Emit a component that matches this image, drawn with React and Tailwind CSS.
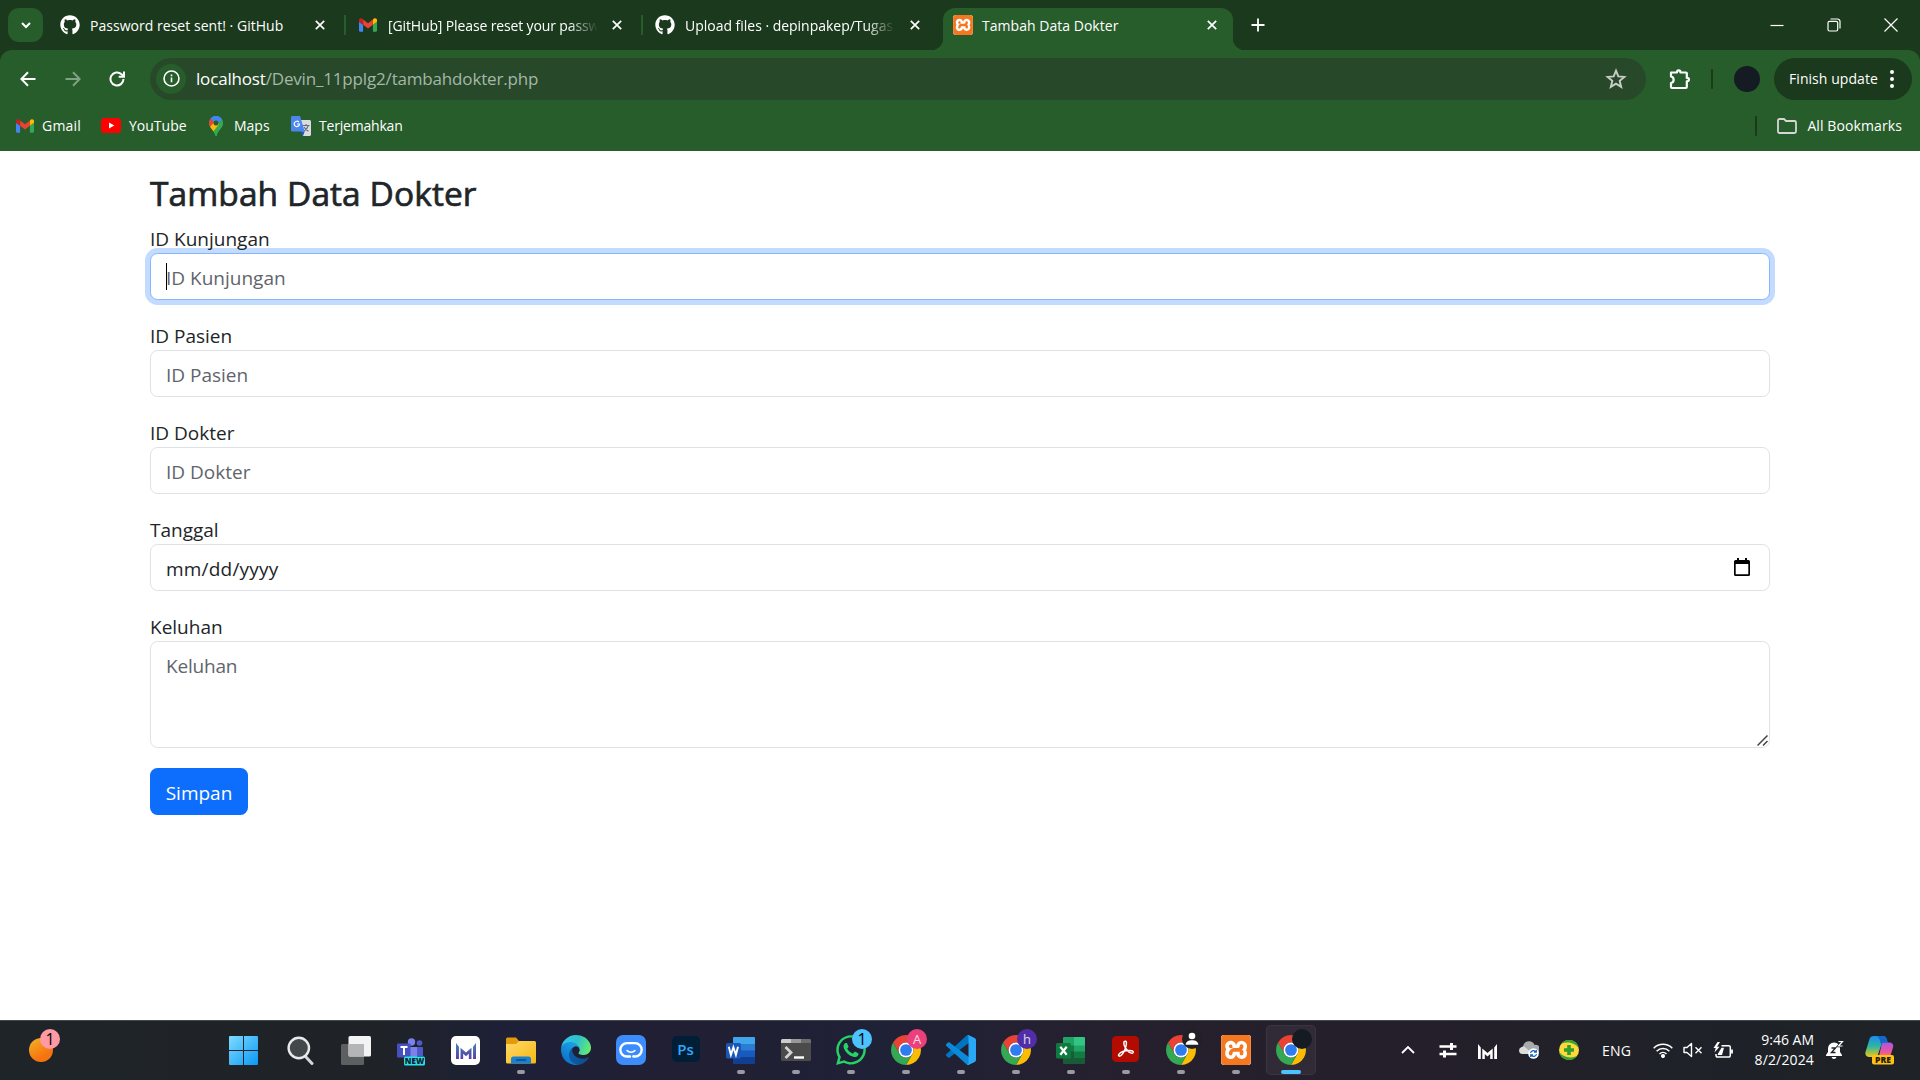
import React from "react";
import { FaGithub, FaWhatsapp } from "react-icons/fa";
import { SiXampp } from "react-icons/si";

/* ---------- Brand icons ---------- */

const Gmail = ({ className }) => (
  <svg viewBox="52 42 88 66" className={className}>
    <path fill="#4285f4" d="M58 108h14V74L52 59v43c0 3.32 2.69 6 6 6" />
    <path fill="#34a853" d="M120 108h14c3.32 0 6-2.69 6-6V59l-20 15" />
    <path fill="#fbbc04" d="M120 48v26l20-15v-8c0-7.42-8.47-11.65-14.4-7.2" />
    <path fill="#ea4335" d="M72 74V48l24 18 24-18v26L96 92" />
    <path fill="#c5221f" d="M52 51v8l20 15V48l-5.6-4.2c-5.94-4.45-14.4-.22-14.4 7.2" />
  </svg>
);

const Chrome = ({ className }) => (
  <svg viewBox="2 2 44 44" className={className}>
    <path fill="#ea4335" d="M4.95 13A22 22 0 0 1 43.05 13H24A11 11 0 0 0 14.47 29.5Z" />
    <path fill="#fbbc04" d="M43.05 13A22 22 0 0 1 24 46L33.53 29.5A11 11 0 0 0 24 13Z" />
    <path fill="#34a853" d="M24 46A22 22 0 0 1 4.95 13L14.47 29.5A11 11 0 0 0 33.53 29.5Z" />
    <circle cx="24" cy="24" r="11" fill="#fff" />
    <circle cx="24" cy="24" r="8.6" fill="#2f7bf0" />
  </svg>
);

const Xampp = ({ className }) => (
  <span className={`relative block overflow-hidden rounded-[3px] bg-white ${className}`}>
    <SiXampp className="block h-full w-full text-[#f5771f]" />
  </span>
);

const YouTube = () => (
  <svg viewBox="0 0 20 15" className="h-[15px] w-5">
    <rect width="20" height="15" rx="3.6" fill="#f00" />
    <path d="M8 4.4v6.2l5.3-3.1z" fill="#fff" />
  </svg>
);

const MapsPin = () => (
  <svg viewBox="0 0 14 20" className="h-5 w-3.5">
    <defs>
      <clipPath id="pin">
        <path d="M7 0a7 7 0 0 1 7 7c0 5.2-5 6.700-6.300 12.400-.2.800-1.200.800-1.400 0C5 13.700 0 12.200 0 7a7 7 0 0 1 7-7z" />
      </clipPath>
    </defs>
    <g clipPath="url(#pin)">
      <rect width="14" height="20" fill="#34a853" />
      <path d="M0 0h7L2 6H0z" fill="#1a73e8" />
      <path d="M4 0h10v3L7 9z" fill="#4285f4" />
      <path d="M0 1l6 5-4 6H0z" fill="#ea4335" />
      <path d="M1 11l6-7 4 5-7 7z" fill="#fbbc04" />
      <path d="M14 3L4 16l3 4h7z" fill="#34a853" />
      <path d="M3 0h9v3L7 8 1.500 2.500z" fill="#4285f4" />
    </g>
    <circle cx="7" cy="7" r="2.500" fill="#275d2b" />
  </svg>
);

const Translate = () => (
  <svg viewBox="0 0 20 20" className="h-5 w-5">
    <path d="M7 4h11.500c.9 0 1.500.6 1.500 1.500v13c0 .9-.6 1.500-1.500 1.500H12z" fill="#dadce0" />
    <path d="M11.500 9.500h7M15 8v1.500M17.300 9.500c-.7 2.700-2.300 4.300-4.300 5.500M13 11c.8 1.700 2.400 3.300 4.500 4.200" stroke="#5f6f80" strokeWidth="1.100" fill="none" />
    <path d="M1.500 0H9l4.700 15.500H1.500C.6 15.500 0 14.900 0 14V1.500C0 .6.6 0 1.500 0z" fill="#4a86ee" />
    <path d="M9.500 15.500h4.200L12 20z" fill="#1a57c2" />
    <path d="M7.900 6.100A2.700 2.700 0 1 0 8.600 8H6" stroke="#fff" strokeWidth="1.200" fill="none" />
  </svg>
);

/* ---------- Browser frame ---------- */

const CloseX = ({ className = "" }) => (
  <svg viewBox="0 0 10 10" className={`h-2.5 w-2.5 shrink-0 ${className}`}>
    <path d="M.8.8l8.400 8.400M9.200.8L.8 9.200" stroke="#fff" strokeWidth="1.700" fill="none" />
  </svg>
);

const Fade = ({ children }) => (
  <span className="w-[210px] shrink-0 overflow-hidden whitespace-nowrap [mask-image:linear-gradient(to_right,#000_86%,transparent)]">
    {children}
  </span>
);

const TabStrip = () => (
  <div className="flex h-[50px] bg-[#1b391c] text-[14px] text-white">
    <div className="mt-2 ml-2 flex h-[34px] w-[35px] items-center justify-center rounded-[11px] bg-[#275d2b]">
      <svg viewBox="0 0 10 7" className="h-[7px] w-2.5"><path d="M1 1l4 4 4-4" stroke="#fff" strokeWidth="2" fill="none" /></svg>
    </div>
    <div className="flex w-[301px] items-center pl-[17px]">
      <FaGithub className="h-5 w-5 shrink-0" />
      <span className="ml-2.5 w-[225px] whitespace-nowrap tracking-[0.03px]">Password reset sent! · GitHub</span>
      <CloseX />
    </div>
    <div className="mt-[15px] h-5 w-0.5 bg-[#275d2b]" />
    <div className="flex w-[295px] items-center pl-[13px]">
      <Gmail className="h-3.5 w-[18px] shrink-0" />
      <span className="w-[11px] shrink-0" />
      <Fade><span className="tracking-[-0.13px]">[GitHub] Please reset your passw</span></Fade>
      <CloseX className="ml-[14px]" />
    </div>
    <div className="mt-[15px] h-5 w-0.5 bg-[#275d2b]" />
    <div className="flex w-[300px] items-center pl-3">
      <FaGithub className="h-5 w-5 shrink-0" />
      <span className="w-2.5 shrink-0" />
      <Fade><span className="tracking-[-0.02px]">Upload files · depinpakep/Tugas</span></Fade>
      <CloseX className="ml-[15px]" />
    </div>
    <div className="relative mt-2 flex h-[42px] w-[290px] items-center rounded-t-[12px] bg-[#275d2b] pl-2.5 pb-2">
      <span className="absolute bottom-0 -left-3 h-3 w-3 bg-[radial-gradient(circle_at_0_0,transparent_12px,#275d2b_12.5px)]" />
      <span className="absolute -right-3 bottom-0 h-3 w-3 bg-[radial-gradient(circle_at_100%_0,transparent_12px,#275d2b_12.5px)]" />
      <Xampp className="h-5 w-5 shrink-0" />
      <span className="ml-[9px] w-[225px] whitespace-nowrap tracking-[0.03px]">Tambah Data Dokter</span>
      <CloseX />
    </div>
    <svg viewBox="0 0 14 14" className="mt-[18px] ml-[18px] h-3.5 w-3.5"><path d="M7 .5v13M.5 7h13" stroke="#fff" strokeWidth="1.800" /></svg>
    <div className="ml-auto flex items-center gap-[43px] pr-[22px]">
      <svg viewBox="0 0 14 14" className="h-3.5 w-3.5"><path d="M.5 7.500h13" stroke="#fff" strokeWidth="1.200" /></svg>
      <svg viewBox="0 0 14 14" className="h-3.5 w-3.5" fill="none" stroke="#fff" strokeWidth="1.200">
        <rect x="1" y="3.300" width="9.700" height="9.700" rx="1.500" />
        <path d="M3.500 1h7A2.500 2.500 0 0 1 13 3.500v7" />
      </svg>
      <svg viewBox="0 0 14 14" className="h-3.5 w-3.5"><path d="M.5.5l13 13M13.500.5l-13 13" stroke="#fff" strokeWidth="1.200" /></svg>
    </div>
  </div>
);

const Toolbar = () => (
  <div className="bg-[#1b391c]">
    <div className="flex h-[57px] items-center rounded-t-[12px] bg-[#275d2b] pl-5 pr-2">
      <svg viewBox="0 0 16 16" className="h-4 w-4" fill="none" stroke="#fff" strokeWidth="2"><path d="M15.500 8H1.500M8 1.300L1.400 8 8 14.700" /></svg>
      <svg viewBox="0 0 16 16" className="ml-[29px] h-4 w-4" fill="none" stroke="#80a282" strokeWidth="2"><path d="M.5 8h14M8 1.300L14.600 8 8 14.700" /></svg>
      <svg viewBox="0 0 16 16" className="ml-[28px] h-4 w-4" fill="none" stroke="#fff" strokeWidth="2"><path d="M14.500 8a6.500 6.500 0 1 1-2-4.700L14.500 5.300" /><path d="M15 .5v5.300H9.700" /></svg>
      <div className="ml-[25px] flex h-[42px] w-[1496px] items-center rounded-full bg-[#27492a] pl-1.5">
        <span className="flex h-[30px] w-[30px] items-center justify-center rounded-full bg-[#275d2b]">
          <svg viewBox="0 0 18 18" className="h-[17px] w-[17px]"><circle cx="9" cy="9" r="7.900" stroke="#fff" strokeWidth="1.700" fill="none" /><path d="M9 8v5M9 4.800v1.700" stroke="#fff" strokeWidth="1.700" /></svg>
        </span>
        <span className="mt-px ml-[10px] text-[17px] tracking-[-0.17px] text-[#a5b7a6]"><span className="text-white">localhost</span>/Devin_11pplg2/tambahdokter.php</span>
        <svg viewBox="0 0 24 24" className="mr-[18px] ml-auto h-6 w-6" fill="none" stroke="#c8cdc8" strokeWidth="1.900"><path d="M12 3.700l2.300 5.700 6.100.5-4.700 4 1.500 6L12 16.700l-5.200 3.200 1.500-6-4.700-4 6.100-.5z" /></svg>
      </div>
      <svg viewBox="0 0 22 22" className="ml-[23px] h-[22px] w-[22px]" fill="none" stroke="#fff" strokeWidth="2.200" strokeLinejoin="round"><path d="M2 4.500h6V4a1.700 1.700 0 0 1 3.400 0v.5H17a.8.8 0 0 1 .8.8v4.600h.4a1.700 1.700 0 0 1 0 3.400h-.4V19a1 1 0 0 1-1 1H3a1 1 0 0 1-1-1v-4c3.500-.5 3.500-6 0-6.500z" /></svg>
      <span className="ml-[20px] h-5 w-0.5 rounded bg-[#1b391c]" />
      <span className="ml-[21px] h-[26px] w-[26px] rounded-full bg-[#151b23]" />
      <div className="ml-auto flex h-[42px] w-[138px] items-center rounded-full bg-[#1b391c] pl-[15px] text-[14px] text-white">
        <span className="w-[99px] whitespace-nowrap tracking-[0.06px]">Finish update</span>
        <svg viewBox="0 0 4 18" className="h-[18px] w-1 ml-0.5" fill="#fff"><circle cx="2" cy="2" r="2" /><circle cx="2" cy="9" r="2" /><circle cx="2" cy="16" r="2" /></svg>
      </div>
    </div>
  </div>
);

const Bookmarks = () => (
  <div className="flex h-11 items-center bg-[#275d2b] pb-[7px] pl-4 text-[14px] text-white">
    <Gmail className="h-3.5 w-[18px]" />
    <span className="ml-2 w-[59px] tracking-[0.2px]">Gmail</span>
    <YouTube />
    <span className="ml-2 w-20">YouTube</span>
    <MapsPin />
    <span className="ml-[11px] w-[57px]">Maps</span>
    <Translate />
    <span className="ml-2 tracking-[-0.2px]">Terjemahkan</span>
    <span className="ml-auto h-5 w-0.5 rounded bg-[#1b391c]" />
    <svg viewBox="0 0 20 16" className="ml-[20px] h-4 w-5" fill="none" stroke="#d6d6d6" strokeWidth="1.800"><path d="M1 2.500A1.500 1.500 0 0 1 2.500 1H7l2 2h8.500A1.500 1.500 0 0 1 19 4.500v9a1.500 1.500 0 0 1-1.500 1.500h-15A1.500 1.500 0 0 1 1 13.500z" /></svg>
    <span className="mr-[18px] ml-2.5 whitespace-nowrap tracking-[0.1px]">All Bookmarks</span>
  </div>
);

/* ---------- Form page ---------- */

const fieldBase =
  "block h-[47px] w-full rounded-[7.5px] border bg-white px-[15px] pt-[2px] text-[19px] text-[#212529] outline-none placeholder:text-[#5f656b]";

const Field = ({ label, children }) => (
  <div className="mb-5">
    <label className="relative z-10 block h-[30px] text-[19px] leading-[33px] text-[#212529]">{label}</label>
    <div className="relative">{children}</div>
  </div>
);

const FormPage = () => (
  <main className="h-[869px] bg-white px-[150px] pt-[20px]">
    <h2 className="mb-[10px] h-[42px] text-[33.5px] leading-[45px] font-medium tracking-[0.08px] whitespace-nowrap text-[#212529] [-webkit-text-stroke:0.7px_#212529]">Tambah Data Dokter</h2>
    <Field label="ID Kunjungan">
      <input placeholder="ID Kunjungan" className={`${fieldBase} border-[#86b7fe] shadow-[0_0_0_5px_#c2dbfe]`} />
      <span className="absolute top-[10px] left-4 h-[27px] w-px bg-black" />
    </Field>
    <Field label="ID Pasien">
      <input placeholder="ID Pasien" className={`${fieldBase} border-[#dee2e6]`} />
    </Field>
    <Field label="ID Dokter">
      <input placeholder="ID Dokter" className={`${fieldBase} border-[#dee2e6]`} />
    </Field>
    <Field label="Tanggal">
      <input defaultValue="mm/dd/yyyy" className={`${fieldBase} border-[#dee2e6] tracking-[0.2px]`} />
      <svg viewBox="0 0 16 18" className="absolute top-[14px] right-5 h-[18px] w-4">
        <path d="M3 0h2v2h6V0h2v2h1.500A1.500 1.500 0 0 1 16 3.500v13a1.500 1.500 0 0 1-1.500 1.500h-13A1.500 1.500 0 0 1 0 16.500v-13A1.500 1.500 0 0 1 1.500 2H3zM1.700 6v10.300h12.600V6z" fill="#000" fillRule="evenodd" />
      </svg>
    </Field>
    <Field label="Keluhan">
      <textarea placeholder="Keluhan" className="block h-[107px] w-full resize-none rounded-[7.5px] border border-[#dee2e6] bg-white px-[15px] pt-[9px] text-[19px] leading-[30px] tracking-[-0.2px] text-[#212529] outline-none placeholder:text-[#5f656b]" />
      <svg viewBox="0 0 11 11" className="absolute right-[2px] bottom-[2px] h-[11px] w-[11px]"><path d="M.5 10.500l10-10M6 10.500L10.500 6" stroke="#444" strokeWidth="1.500" /></svg>
    </Field>
    <button className="h-[47px] w-[98px] rounded-[7.5px] bg-[#0d6efd] pt-[4px] text-[19px] text-white">Simpan</button>
  </main>
);

/* ---------- Taskbar ---------- */

const StartLogo = () => (
  <svg viewBox="0 0 29 29" className="h-[29px] w-[29px]">
    <defs><linearGradient id="win" x1="0" y1="0" x2="1" y2="1"><stop offset="0" stopColor="#7fdcff" /><stop offset="1" stopColor="#0a97f5" /></linearGradient></defs>
    <path fill="url(#win)" d="M1 0h13v14H0V1a1 1 0 0 1 1-1zM15 0h13a1 1 0 0 1 1 1v13H15zM0 15h14v14H1a1 1 0 0 1-1-1zM15 15h14v13a1 1 0 0 1-1 1H15z" />
  </svg>
);

const SearchIcon = () => (
  <svg viewBox="0 0 27 29" className="h-[29px] w-[27px]">
    <path d="M18.500 20.500l6.500 7" stroke="#d5d8da" strokeWidth="3" strokeLinecap="round" />
    <circle cx="11.800" cy="12" r="10.200" fill="#43484b" stroke="#e8eaeb" strokeWidth="2.400" />
  </svg>
);

const TaskView = () => (
  <svg viewBox="0 0 30 29" className="h-[29px] w-[30px]">
    <rect y="8" width="23" height="21" rx="1.500" fill="#5d5f61" />
    <rect x="7.500" width="22.500" height="20.500" rx="1.500" fill="#f3f3f3" />
    <path d="M7.500 8H23v12.500H9a1.500 1.500 0 0 1-1.500-1.500z" fill="#b4b5b6" />
  </svg>
);

const Teams = () => (
  <svg viewBox="0 0 28 28" className="mt-[3px] h-7 w-7">
    <circle cx="14.500" cy="4" r="3.700" fill="#7b83eb" />
    <circle cx="22.500" cy="5" r="2.800" fill="#5059c9" />
    <path d="M18 9h7a1 1 0 0 1 1 1v8H18z" fill="#5059c9" />
    <path d="M9 9h11v10H9z" fill="#7b83eb" />
    <rect y="5.500" width="13.500" height="14" rx="1" fill="#4650bf" />
    <path d="M3.500 9h7M7 9v8" stroke="#fff" strokeWidth="2" />
    <rect x="7" y="18.500" width="21" height="9" rx="1.500" fill="#2be0ea" />
    <text x="17.500" y="26" textAnchor="middle" fontSize="8" fontWeight="800" fontFamily="Open Sans, sans-serif" fill="#0a2330">NEW</text>
  </svg>
);

const MShape = ({ fill }) => (
  <path fill={fill} d="M0 0l2.800 3.500V15H0zM19 0l-2.800 3.500V15H19zM4.300 15V4.500L9.500 9l5.200-4.500V15h-2.500v-5L9.500 12.500 6.800 10v5z" />
);

const MApp = () => (
  <span className="flex h-[29px] w-[29px] items-center justify-center rounded-[5px] bg-white">
    <svg viewBox="0 0 19 15" className="mt-px h-[16px] w-[20px]">
      <defs><linearGradient id="mg" gradientUnits="userSpaceOnUse" x1="0" y1="0" x2="0" y2="15"><stop stopColor="#4383b4" /><stop offset="1" stopColor="#5a3fa8" /></linearGradient></defs>
      <MShape fill="url(#mg)" />
    </svg>
  </span>
);

const Explorer = () => (
  <svg viewBox="0 0 30 27" className="h-[27px] w-[30px]">
    <defs><linearGradient id="ex" x1="0" y1="0" x2="1" y2="1"><stop stopColor="#ffd968" /><stop offset="1" stopColor="#f9b612" /></linearGradient></defs>
    <path d="M0 2a1.500 1.500 0 0 1 1.500-1.500H10L13 4v4H0z" fill="#e39b0b" />
    <path d="M0 7h10l3-3h15.500A1.500 1.500 0 0 1 30 5.500V25a1.500 1.500 0 0 1-1.500 1.500h-27A1.500 1.500 0 0 1 0 25z" fill="url(#ex)" />
    <path d="M5 26.500V22a2.500 2.500 0 0 1 2.500-2.500h15A2.500 2.500 0 0 1 25 22v4.500z" fill="#1a80d4" />
    <path d="M10 23h10" stroke="#0b4f8c" strokeWidth="1.600" />
  </svg>
);

const Edge = () => (
  <svg viewBox="0 0 256 256" className="h-[30px] w-[30px]">
    <defs>
      <linearGradient id="e1" x1=".25" y1="0" x2="1" y2="0"><stop stopColor="#0c59a4" /><stop offset="1" stopColor="#114a8b" /></linearGradient>
      <linearGradient id="e2" x1=".7" y1=".2" x2=".2" y2="1"><stop stopColor="#1b9de2" /><stop offset="1" stopColor="#0a6cc4" /></linearGradient>
      <linearGradient id="e3" x1="0" y1=".3" x2="1" y2=".6"><stop stopColor="#35c1f1" /><stop offset=".5" stopColor="#2ec2c9" /><stop offset="1" stopColor="#66eb6e" /></linearGradient>
    </defs>
    <path fill="url(#e1)" d="M231 190.500c-3.400 1.800-6.900 3.400-10.500 4.700a101.500 101.500 0 0 1-35.900 6.500c-47.300 0-88.500-32.500-88.500-74.300a31.500 31.500 0 0 1 16.400-27.300c-42.800 1.800-53.800 46.400-53.800 72.500 0 73.900 68.100 81.400 82.800 81.400 7.900 0 19.800-2.300 27-4.600l1.300-.4a128.300 128.300 0 0 0 66.600-52.800 4 4 0 0 0-5.400-5.700z" />
    <path fill="url(#e2)" d="M105.700 241.500a79.200 79.200 0 0 1-22.700-21.300 80.700 80.700 0 0 1 29.500-120c3.200-1.500 8.500-4.100 15.600-4a32.400 32.400 0 0 1 25.700 13 31.900 31.900 0 0 1 6.300 18.700c0-.2 24.500-79.600-80-79.600-43.900 0-80 41.700-80 78.200a130.200 130.200 0 0 0 12.100 56 128 128 0 0 0 156.400 67 75.500 75.500 0 0 1-62.800-8z" />
    <path fill="url(#e3)" d="M152.300 148.900c-.9 1-3.300 2.500-3.300 5.700 0 2.600 1.700 5.100 4.700 7.200 14.400 10 41.500 8.700 41.600 8.700a59.600 59.600 0 0 0 30.300-8.300 61.400 61.400 0 0 0 30.400-52.900c.3-22.400-8-37.300-11.300-43.900C223.500 23.900 177.700 0 128 0A128 128 0 0 0 0 126.200c.5-36.500 36.800-66 80-66 3.500 0 23.500.3 42 10.100 16.300 8.600 24.900 19 30.800 29.200 6.200 10.700 7.300 24.100 7.300 29.500s-2.700 13.300-7.800 19.900z" />
  </svg>
);

const BlueFace = () => (
  <svg viewBox="0 0 30 30" className="h-[30px] w-[30px]">
    <rect width="30" height="30" rx="7" fill="#3c8cfb" />
    <path d="M14 21.500h-3a6.700 6.700 0 0 1 0-13.400h8a6.700 6.700 0 0 1 0 13.400" fill="none" stroke="#fff" strokeWidth="2.400" strokeLinecap="round" />
    <path d="M11 15.500c2 2.300 6 2.300 8 0" fill="none" stroke="#fff" strokeWidth="1.500" strokeLinecap="round" />
    <circle cx="17.500" cy="21.400" r="1.300" fill="#fff" />
  </svg>
);

const Photoshop = () => (
  <span className="mb-[2px] flex h-[26px] w-[28px] items-center justify-center rounded-[5px] bg-[#001e36] text-[15px] leading-none font-semibold text-[#31a8ff]">Ps</span>
);

const Word = () => (
  <svg viewBox="0 0 29 27" className="h-[27px] w-[29px]">
    <path d="M7 1a1 1 0 0 1 1-1h20a1 1 0 0 1 1 1v6H7z" fill="#41a5ee" />
    <path d="M7 7h22v7H7z" fill="#2b7cd3" />
    <path d="M7 13.500h22v7H7z" fill="#185abd" />
    <path d="M7 20h22v6a1 1 0 0 1-1 1H8a1 1 0 0 1-1-1z" fill="#103f91" />
    <rect y="6" width="15" height="15.500" rx="1.500" fill="#1c57b8" />
    <path d="M2.800 9.800l2.100 8 2.500-7.500 2.500 7.500 2.100-8" fill="none" stroke="#fff" strokeWidth="1.900" />
  </svg>
);

const Excel = () => (
  <svg viewBox="0 0 29 27" className="h-[27px] w-[29px]">
    <path d="M7 1a1 1 0 0 1 1-1h10v9H7z" fill="#21a366" />
    <path d="M18 0h10a1 1 0 0 1 1 1v8H18z" fill="#33c481" />
    <path d="M7 8.500h11v6.500H7z" fill="#107c41" />
    <path d="M18 8.500h11v6.500H18z" fill="#21a366" />
    <path d="M18 14.500h11v6.500H18z" fill="#107c41" />
    <path d="M7 14.500h11V21H29v5a1 1 0 0 1-1 1H8a1 1 0 0 1-1-1z" fill="#185c37" />
    <rect y="6" width="15" height="15.500" rx="1.500" fill="#0f7a40" />
    <path d="M4.300 9.800l6.400 8M10.700 9.800l-6.400 8" fill="none" stroke="#fff" strokeWidth="2.200" />
  </svg>
);

const Terminal = () => (
  <svg viewBox="0 0 30 22" className="h-[22px] w-[30px]">
    <rect width="30" height="22" rx="1.500" fill="#4b4b4b" />
    <path d="M1.500 0H10v4H0V1.500A1.500 1.500 0 0 1 1.500 0z" fill="#ccc" />
    <path d="M10 0h10v4H10z" fill="#999" />
    <path d="M20 0h8.500A1.500 1.500 0 0 1 30 1.500V4H20z" fill="#6e6e6e" />
    <path d="M4.500 8l5.500 5.500L4.500 19" stroke="#d2d2d2" strokeWidth="2.800" fill="none" />
    <path d="M13 18.500h10" stroke="#fff" strokeWidth="2.400" />
  </svg>
);

const VSCode = () => (
  <svg viewBox="0 0 100 100" className="h-[30px] w-[30px]">
    <path fill="#0074c1" d="M96.460 10.800L75.860.880C73.470-.270 70.620.210 68.750 2.080L1.300 63.580c-1.820 1.650-1.820 4.510 0 6.160l5.510 5.010c1.490 1.350 3.720 1.450 5.320.24L93.360 13.370C96.090 11.300 100 13.250 100 16.670v-.24c0-2.400-1.380-4.590-3.540-5.630z" />
    <path fill="#0a8ad8" d="M96.460 89.200L75.860 99.120c-2.390 1.150-5.240.67-7.110-1.200L1.300 36.420c-1.820-1.660-1.820-4.510 0-6.170l5.510-5c1.490-1.350 3.720-1.450 5.320-.24l81.230 61.620C96.090 88.700 100 86.750 100 83.330v.24c0 2.400-1.380 4.590-3.540 5.630z" />
    <path fill="#2aa8f5" d="M75.860 99.130c-2.390 1.150-5.240.66-7.110-1.210 2.310 2.300 6.250.67 6.250-2.590V4.670c0-3.260-3.940-4.890-6.250-2.590C70.620.210 73.470-.270 75.860.870l20.600 9.910c2.160 1.040 3.540 3.230 3.540 5.630v67.180c0 2.400-1.380 4.590-3.540 5.630z" />
  </svg>
);

const Acrobat = () => (
  <svg viewBox="0 0 27 26" className="mb-[2px] h-[26px] w-[27px]">
    <rect width="27" height="26" rx="4.500" fill="#b30b00" />
    <path d="M12.800 5.200c1.900-.5 1.900 2 1.200 5-.9 3.800-3 7.600-5 9.300-1.600 1.300-3.300.3-2-1.400 1.700-2.200 6.500-3.500 10.500-3.500 3 0 4.200 1 3.600 2-.9 1.300-3.700.1-5.500-1.900-2.200-2.400-4-6.300-3.700-8.300.1-.6.400-1.100.9-1.200z" fill="none" stroke="#fff" strokeWidth="1.500" />
  </svg>
);

const Badge = ({ className, children }) => (
  <span className={`absolute flex h-5 w-5 items-center justify-center rounded-full leading-none ${className}`}>{children}</span>
);

const Person = () => (
  <svg viewBox="0 0 20 20" className="h-5 w-5" fill="#fff"><circle cx="10" cy="7" r="3.300" /><path d="M3.700 15.700c0-3.300 3-4.500 6.300-4.500s6.300 1.200 6.300 4.500z" /></svg>
);

const apps = [
  { icon: <SearchIcon /> },
  { icon: <TaskView /> },
  { icon: <Teams /> },
  { icon: <MApp /> },
  { icon: <Explorer />, run: true },
  { icon: <Edge /> },
  { icon: <BlueFace /> },
  { icon: <Photoshop /> },
  { icon: <Word />, run: true },
  { icon: <Terminal />, run: true },
  { icon: <FaWhatsapp className="h-[34px] w-[34px] text-[#25d366]" />, run: true, badge: <Badge className="top-[9px] left-[29px] bg-[#4cc2ff] text-[16px] text-black">1</Badge> },
  { icon: <Chrome className="h-[30px] w-[30px]" />, run: true, badge: <Badge className="top-[9px] left-[29px] bg-[#ec407a] text-[13px] text-white/80">A</Badge> },
  { icon: <VSCode />, run: true },
  { icon: <Chrome className="h-[30px] w-[30px]" />, run: true, badge: <Badge className="top-[9px] left-[29px] bg-[#512da8] text-[13px] text-white/80">h</Badge> },
  { icon: <Excel />, run: true },
  { icon: <Acrobat />, run: true },
  { icon: <Chrome className="h-[30px] w-[30px]" />, run: true, badge: <Badge className="top-[9px] left-[29px] bg-[#202124]"><Person /></Badge> },
  { icon: <Xampp className="h-[30px] w-[30px]" />, run: true },
  { icon: <Chrome className="h-[30px] w-[30px]" />, active: true, badge: <Badge className="top-[9px] left-[29px] bg-[#151b23]" /> },
];

const Taskbar = () => (
  <footer className="flex h-[60px] bg-[linear-gradient(90deg,#1f2428_0%,#1f2328_20%,#1e2038_27%,#211f33_35%,#1f2137_46%,#26202e_58%,#241f2a_75%,#1e2228_90%,#1f2327_100%)] text-white shadow-[inset_0_1px_0_#42474b]">
    <div className="relative w-[216px] shrink-0">
      <span className="absolute top-[18px] left-[29px] h-6 w-6 rounded-full bg-[linear-gradient(150deg,#f0b429,#f7730f_70%)]" />
      <Badge className="top-[9px] left-[40px] bg-[#ff99a4] text-[16px] text-black">1</Badge>
    </div>
    <div className="mr-[2px] flex h-[60px] w-[55px] shrink-0 items-center justify-center"><StartLogo /></div>
    {apps.map((a, i) => (
      <div key={i} className="relative flex h-[60px] w-[55px] shrink-0 items-center justify-center">
        {a.active && <span className="absolute top-[5px] left-[3px] h-[50px] w-[50px] rounded-[5px] border border-white/5 bg-white/5" />}
        <span className="relative">{a.icon}</span>
        {a.badge}
        {a.run && <span className="absolute top-[50px] left-[24px] h-1 w-2 rounded-full bg-[#9a9aa2]" />}
        {a.active && <span className="absolute top-[50px] left-[18px] h-1 w-5 rounded-full bg-[#4cc2ff]" />}
      </div>
    ))}
    <div className="ml-auto flex items-center">
      <svg viewBox="0 0 14 8" className="h-2 w-3.5" fill="none" stroke="#fff" strokeWidth="1.800"><path d="M1 7l6-6 6 6" /></svg>
      <svg viewBox="0 0 18 16" className="ml-[24px] h-4 w-[18px]" fill="none" stroke="#fff"><path d="M.5 4.500h17M.5 12h17" strokeWidth="2.400" /><path d="M12.500 1v7M5.500 8.500v7" strokeWidth="3" /></svg>
      <svg viewBox="0 0 19 15" className="ml-[21px] mt-0.5 h-[15px] w-[19px]"><MShape fill="#fff" /></svg>
      <svg viewBox="0 0 20 18" className="ml-[22px] h-[18px] w-5">
        <path d="M4.500 13A4 4 0 0 1 4 5.500 6 6 0 0 1 15.500 4 4.500 4.500 0 0 1 18 13z" fill="#a9aaac" />
        <path d="M0 9.500A4 4 0 0 1 7 7l7 6H4a3.800 3.800 0 0 1-4-3.500z" fill="#dcdcdc" />
        <circle cx="14.500" cy="12.500" r="5.300" fill="#fff" />
        <path d="M11.500 12a3 3 0 0 1 5.500-1M17.500 13a3 3 0 0 1-5.500 1M17.300 9v2.200H15M11.700 16v-2.200H14" stroke="#0f63c5" strokeWidth="1.200" fill="none" />
      </svg>
      <svg viewBox="0 0 20 20" className="ml-[20px] h-5 w-5">
        <circle cx="10" cy="10" r="10" fill="#ffd93b" />
        <path d="M2 4A10 10 0 0 1 19.900 8.500C17 3.500 9 .800 2 4zM18 16A10 10 0 0 1 .1 11.500C3 16.500 11 19.200 18 16z" fill="#3aa336" />
        <path d="M10 5v10M5 10h10" stroke="#2f9e2c" strokeWidth="3.600" />
      </svg>
      <span className="ml-[23px] w-[30px] text-[14px] tracking-[0.2px]">ENG</span>
      <svg viewBox="0 0 20 16" className="ml-[21px] h-4 w-5" fill="none" stroke="#fff" strokeWidth="1.500"><path d="M.7 6.200a13 13 0 0 1 18.600 0M3.600 9.200a9 9 0 0 1 12.800 0M6.500 12a5 5 0 0 1 7 0" /><circle cx="10" cy="14" r="1.300" fill="#fff" /></svg>
      <svg viewBox="0 0 20 16" className="ml-[10px] h-4 w-5" fill="none" stroke="#fff" strokeWidth="1.400"><path d="M1 5.500h3l4.500-4v13l-4.500-4H1z" strokeLinejoin="round" /><path d="M12.500 5.200l6 6M18.500 5.200l-6 6" /></svg>
      <svg viewBox="0 0 20 17" className="ml-[10px] h-[17px] w-5" fill="none" stroke="#fff" strokeWidth="1.500"><path d="M8.500 3.800h7.300a1.500 1.500 0 0 1 1.500 1.500v8.300a1.500 1.500 0 0 1-1.500 1.500H4.500A1.500 1.500 0 0 1 3 13.600V12" /><path d="M19 7.500v4" strokeWidth="1.800" /><path d="M8.500 5.800h2.500L9 13H4.800v-1z" fill="#fff" stroke="none" /><path d="M4.500 0L.5 6h2.200L1.500 10.500 6.500 4.700H4L7 0z" fill="#fff" stroke="none" /></svg>
      <div className="ml-[19px] w-[62px] text-right text-[14px] leading-5 whitespace-nowrap"><div>9:46 AM</div><div className="tracking-[0.15px]">8/2/2024</div></div>
      <svg viewBox="0 0 18 20" className="ml-[12px] h-5 w-[18px]"><path d="M8 2.500a5.800 5.800 0 0 1 6 5.500v4l2 3v1H0v-1l2-3V8.500a6 6 0 0 1 6-6zM5.500 17h5a2.600 2.600 0 0 1-5 0z" fill="#fff" /><path d="M5.500 8h4L5.500 12.500h4" stroke="#1e2228" strokeWidth="1.400" fill="none" /><path d="M12.500 1.500h4l-4 4.500h4" stroke="#20242a" strokeWidth="2.600" fill="none" /><path d="M12.500 1.500h4l-4 4.500h4" stroke="#fff" strokeWidth="1.200" fill="none" /></svg>
      <svg viewBox="0 0 30 30" className="mr-[25px] ml-[21px] h-[30px] w-[30px]">
        <defs>
          <linearGradient id="c1" x1="0" y1="0" x2="0" y2="1"><stop stopColor="#1d8bf0" /><stop offset=".5" stopColor="#2fb6a0" /><stop offset="1" stopColor="#f2c811" /></linearGradient>
          <linearGradient id="c2" x1="0" y1="0" x2="0" y2="1"><stop stopColor="#a657e8" /><stop offset=".6" stopColor="#f0559a" /><stop offset="1" stopColor="#fa8b4f" /></linearGradient>
        </defs>
        <path d="M17 7.500h7c3 0 5 1.500 4 5l-2.500 8c-.6 2-2 3-4 3h-8z" fill="url(#c2)" />
        <path d="M9 1h9c2 0 3 1 3.700 3l1 3.500h-2.500c-2.500 0-3.500 1-4.200 3l-3 9c-.5 1.500-1.500 2.500-3 2.500H4.500C1.500 22-.3 20 .5 17L4.500 4C5 2 6.500 1 9 1z" fill="url(#c1)" />
        <path d="M12 1h6c2 0 3 1 3.700 3l1 3.500h-2.500c-2 0-3.200.7-4 2.500C15 6 14.500 2.500 12 1z" fill="#1466c9" />
        <rect x="7" y="20" width="22" height="9.500" rx="2" fill="#ffc20e" />
        <text x="18" y="28" textAnchor="middle" fontSize="8.500" fontWeight="800" fontFamily="Open Sans, sans-serif" fill="#1c1c1c">PRE</text>
      </svg>
    </div>
  </footer>
);

export default function App() {
  return (
    <div className="flex h-[1080px] w-[1920px] flex-col overflow-hidden bg-white font-['Open_Sans','Noto_Sans',sans-serif]">
      <TabStrip />
      <Toolbar />
      <Bookmarks />
      <FormPage />
      <Taskbar />
    </div>
  );
}
